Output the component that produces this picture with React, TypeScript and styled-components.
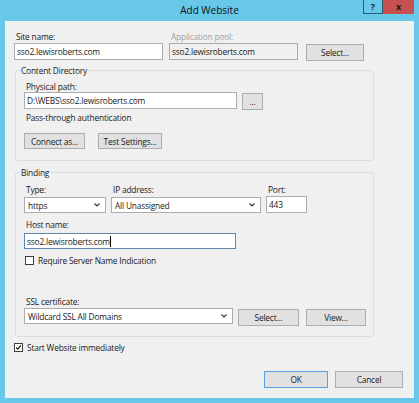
import styled, { createGlobalStyle } from "styled-components";

const GlobalStyle = createGlobalStyle`
  html, body {
    margin: 0;
    padding: 0;
    background: #ffffff;
  }
  body {
    font-family: "Open Sans", "Liberation Sans", sans-serif;
    color: #1a1a1a;
  }
`;

const Chevron = () => (
  <svg width="6" height="4" viewBox="0 0 6 4">
    <path d="M0.5 0.5 L3 3 L5.5 0.5" fill="none" stroke="#333" strokeWidth="1.1" />
  </svg>
);

const CheckMark = () => (
  <svg width="9" height="9" viewBox="0 0 9 9">
    <path d="M1.5 4.5 L3.6 6.6 L7.5 1.8" fill="none" stroke="#111" strokeWidth="1.5" />
  </svg>
);

const App = () => {
  return (
    <>
      <GlobalStyle />
      <Window>
        <TitleBar>
          <Title>Add Website</Title>
          <CaptionButtons>
            <HelpButton>?</HelpButton>
            <CloseButton>x</CloseButton>
          </CaptionButtons>
        </TitleBar>
        <Body>
          <Row>
            <Field $w={149} $mr={6}>
              <Label>Site name:</Label>
              <TextBox readOnly defaultValue="sso2.lewisroberts.com" />
            </Field>
            <Field $w={129} $mr={8}>
              <Label $disabled>Application pool:</Label>
              <TextBox readOnly $disabled defaultValue="sso2.lewisroberts.com" />
            </Field>
            <Button $w={58} $mb={-1}>Select...</Button>
          </Row>

          <Group $mt={5}>
            <Legend>Content Directory</Legend>
            <Label $mb={0}>Physical path:</Label>
            <Row $align="flex-start">
              <TextBox readOnly defaultValue="D:\WEBS\sso2.lewisroberts.com" style={{ width: 213 }} />
              <Button $w={21} $ml={5} $mt={1}>...</Button>
            </Row>
            <Label $mt={2} $mb={0}>Pass-through authentication</Label>
            <Row $mt={10}>
              <Button $w={61} $h={16}>Connect as...</Button>
              <Button $w={64} $h={16} $ml={13}>Test Settings...</Button>
            </Row>
          </Group>

          <Group $mt={6} $pt={6} $pb={10}>
            <Legend>Binding</Legend>
            <Row $align="flex-start">
              <Field $w={82} $mr={5}>
                <Label $mb={2}>Type:</Label>
                <Combo>
                  <span>https</span>
                  <Chevron />
                </Combo>
              </Field>
              <Field $w={150} $mr={5}>
                <Label $mb={2}>IP address:</Label>
                <Combo>
                  <span>All Unassigned</span>
                  <Chevron />
                </Combo>
              </Field>
              <Field $w={41}>
                <Label $mb={1}>Port:</Label>
                <TextBox readOnly defaultValue="443" />
              </Field>
            </Row>
            <Label $mt={6} $mb={3}>Host name:</Label>
            <FocusBox>
              sso2.lewisroberts.com
              <Caret />
            </FocusBox>
            <CheckRow $mt={6}>
              <CheckBox />
              <CheckText>Require Server Name Indication</CheckText>
            </CheckRow>
            <Label $mt={30} $mb={1}>SSL certificate:</Label>
            <Row $align="flex-start">
              <Combo style={{ width: 209 }}>
                <span>Wildcard SSL All Domains</span>
                <Chevron />
              </Combo>
              <Button $w={61} $ml={5} $mt={1}>Select...</Button>
              <Button $w={60} $ml={7} $mt={1}>View...</Button>
            </Row>
          </Group>

          <CheckRow $mt={5} $ml={0}>
            <CheckBox>
              <CheckMark />
            </CheckBox>
            <CheckText>Start Website immediately</CheckText>
          </CheckRow>

          <Footer>
            <Button $w={64} $default>OK</Button>
            <Button $w={68} $ml={7}>Cancel</Button>
          </Footer>
        </Body>
      </Window>
    </>
  );
};
export default App;

const Window = styled.div`
  width: 419px;
  height: 403px;
  box-sizing: border-box;
  background: #68c8ea;
  padding: 0 5px 5px;
  display: flex;
  flex-direction: column;
`;

const TitleBar = styled.div`
  position: relative;
  height: 21px;
  display: flex;
  align-items: center;
  justify-content: center;
`;

const Title = styled.div`
  font-size: 10px;
  color: #111;
  line-height: 21px;
`;

const CaptionButtons = styled.div`
  position: absolute;
  top: 0;
  right: 0;
  display: flex;
`;

const HelpButton = styled.div`
  width: 20px;
  height: 14px;
  box-sizing: border-box;
  border: 1px solid #2f5a6c;
  border-top: none;
  display: flex;
  align-items: center;
  justify-content: center;
  font-size: 9px;
  font-weight: 700;
  color: #1a1a1a;
`;

const CloseButton = styled.div`
  width: 31px;
  height: 14px;
  background: #c75050;
  display: flex;
  align-items: center;
  justify-content: center;
  font-size: 9px;
  font-weight: 700;
  color: #1a1a1a;
  padding-bottom: 1px;
  box-sizing: border-box;
`;

const Body = styled.div`
  flex: 1;
  background: #f0f0f0;
  padding: 10px 10px 0 9px;
  font-size: 8.4px;
  letter-spacing: -0.2px;
  display: flex;
  flex-direction: column;
`;

const Row = styled.div<{ $align?: string; $mt?: number }>`
  display: flex;
  align-items: ${(p) => p.$align ?? "flex-end"};
  margin-top: ${(p) => p.$mt ?? 0}px;
`;

const Field = styled.div<{ $w: number; $mr?: number }>`
  display: flex;
  flex-direction: column;
  width: ${(p) => p.$w}px;
  margin-right: ${(p) => p.$mr ?? 0}px;
`;

const Label = styled.div<{ $disabled?: boolean; $mt?: number; $mb?: number }>`
  height: 11px;
  line-height: 11px;
  padding-left: 2px;
  white-space: nowrap;
  color: ${(p) => (p.$disabled ? "#a0a0a0" : "#1a1a1a")};
  margin-top: ${(p) => p.$mt ?? 0}px;
  margin-bottom: ${(p) => p.$mb ?? 1}px;
`;

const TextBox = styled.input<{ $disabled?: boolean }>`
  box-sizing: border-box;
  width: 100%;
  height: 17px;
  margin: 0;
  padding: 0 2px;
  border: 1px solid ${(p) => (p.$disabled ? "#a9a9a9" : "#abadb3")};
  background: ${(p) => (p.$disabled ? "#f0f0f0" : "#ffffff")};
  font: inherit;
  letter-spacing: inherit;
  color: #1a1a1a;
  outline: none;
  border-radius: 0;
`;

const FocusBox = styled.div`
  box-sizing: border-box;
  width: 212px;
  height: 16px;
  padding: 0 2px;
  border: 1px solid #5f86ad;
  background: #ffffff;
  display: flex;
  align-items: center;
  white-space: nowrap;
`;

const Caret = styled.span`
  display: inline-block;
  width: 1px;
  height: 11px;
  background: #000;
`;

const Combo = styled.div`
  box-sizing: border-box;
  width: 100%;
  height: 16px;
  padding: 0 5px 0 3px;
  border: 1px solid #acacac;
  background: #ffffff;
  display: flex;
  align-items: center;
  justify-content: space-between;
  white-space: nowrap;
`;

const Button = styled.div<{
  $w: number;
  $h?: number;
  $ml?: number;
  $mt?: number;
  $mb?: number;
  $default?: boolean;
}>`
  box-sizing: border-box;
  width: ${(p) => p.$w}px;
  height: ${(p) => p.$h ?? 17}px;
  margin-left: ${(p) => p.$ml ?? 0}px;
  margin-top: ${(p) => p.$mt ?? 0}px;
  margin-bottom: ${(p) => p.$mb ?? 0}px;
  border: 1px solid ${(p) => (p.$default ? "#5f9fdc" : "#adadad")};
  background: #e1e1e1;
  display: flex;
  align-items: center;
  justify-content: center;
  white-space: nowrap;
  color: #1a1a1a;
`;

const Group = styled.fieldset<{ $mt: number; $pt?: number; $pb?: number }>`
  box-sizing: border-box;
  width: 359px;
  min-width: 0;
  margin: ${(p) => p.$mt}px 0 0 1px;
  padding: ${(p) => p.$pt ?? 5}px 0 ${(p) => p.$pb ?? 11}px 8px;
  border: 1px solid #d9dee2;
  border-radius: 3px;
  display: flex;
  flex-direction: column;
  align-items: flex-start;
`;

const Legend = styled.legend`
  padding: 0 1px;
  margin-left: -4px;
  line-height: 11px;
  color: #1a1a1a;
`;

const CheckRow = styled.div<{ $mt: number; $ml?: number }>`
  display: flex;
  align-items: center;
  height: 11px;
  margin-top: ${(p) => p.$mt}px;
  margin-left: ${(p) => p.$ml ?? 1}px;
`;

const CheckBox = styled.div`
  box-sizing: border-box;
  width: 9px;
  height: 9px;
  border: 1px solid #3c3c3c;
  background: #ffffff;
  display: flex;
  align-items: center;
  justify-content: center;
  overflow: hidden;
`;

const CheckText = styled.span`
  margin-left: 4px;
  white-space: nowrap;
`;

const Footer = styled.div`
  display: flex;
  justify-content: flex-end;
  margin-top: 18px;
  margin-right: 1px;
`;
